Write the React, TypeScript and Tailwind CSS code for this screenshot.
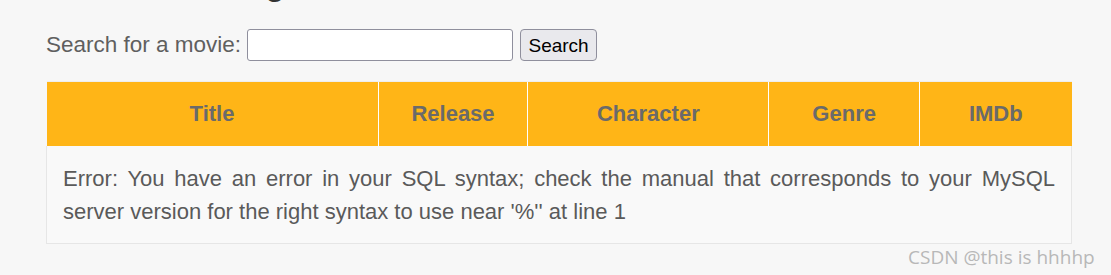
import React from "react";

export default function App() {
  const cols = [
    { name: "Title", w: "w-[332px]" },
    { name: "Release", w: "w-[150px]" },
    { name: "Character", w: "w-[241px]" },
    { name: "Genre", w: "w-[151px]" },
    { name: "IMDb", w: "w-[152px]" },
  ];
  return (
    <div className="relative w-[1111px] h-[275px] overflow-hidden bg-[#f7f7f7] font-['Liberation_Sans',Arial,sans-serif]">
      <div className="h-[6px] overflow-hidden pl-[56px]">
        <h1 className="mt-[-35px] text-[33px] leading-[37px] font-bold text-[#333] whitespace-nowrap">
          &nbsp;&nbsp;Movie Listing
        </h1>
      </div>
      <div className="pl-[46px] pt-[20px] flex items-center h-[38px] box-content">
        <span className="text-[22.5px] text-[#5f5f5f] mr-[6px] leading-none">Search for a movie:</span>
        <input
          type="text"
          className="w-[266px] h-[32px] bg-white border border-[#8f8f9d] rounded-[3px]"
        />
        <button className="ml-[7px] w-[77px] h-[32px] bg-[#e9e9ed] border border-[#8f8f9d] rounded-[4px] text-[19px] text-black leading-none">
          Search
        </button>
      </div>
      <div className="pl-[46px] pt-[17px]">
        <table className="border-collapse w-[1026px]">
          <thead>
            <tr className="bg-[#ffb517] h-[64px]">
              {cols.map((c, i) => (
                <th
                  key={c.name}
                  className={`${c.w} text-[22px] font-bold text-[#6a6a6a] text-center ${
                    i > 0 ? "border-l border-white" : ""
                  } border-t border-t-[#eeeeee]`}
                >
                  {c.name}
                </th>
              ))}
            </tr>
          </thead>
          <tbody>
            <tr>
              <td
                colSpan={5}
                className="border border-[#e6e6e6] border-t-0 bg-[#f9f9f9] px-[16px] pt-[16px] pb-[15px] text-[22px] leading-[33px] text-[#5a5a5a] text-justify"
              >
                Error: You have an error in your SQL syntax; check the manual that corresponds to your MySQL server version for the right syntax to use near '%'' at line 1
              </td>
            </tr>
          </tbody>
        </table>
      </div>
      <div className="absolute left-[908px] top-[245px] text-[19px] leading-[24px] text-[#b8b8b8] font-['Open_Sans','Noto_Sans',sans-serif]">
        CSDN @this is hhhhp
      </div>
    </div>
  );
}
